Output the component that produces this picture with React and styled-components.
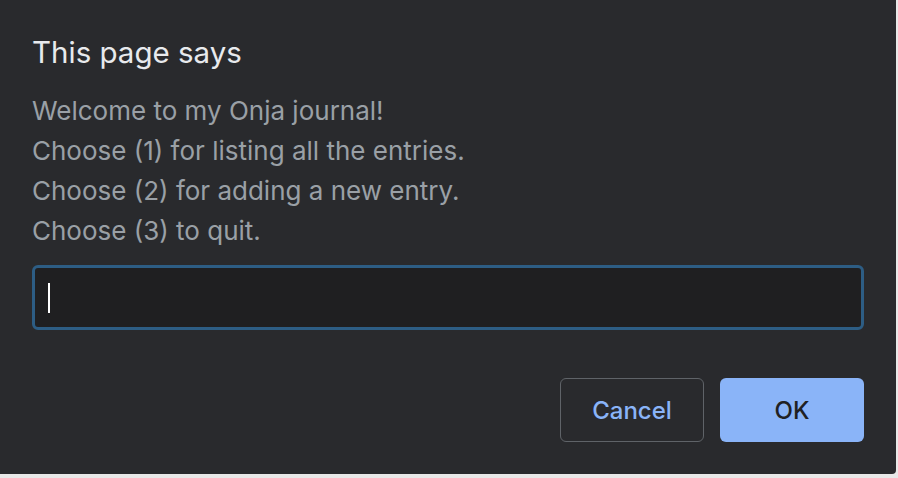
import React from 'react';
import styled, { createGlobalStyle } from 'styled-components';

const GlobalStyle = createGlobalStyle`
  html, body {
    margin: 0;
    padding: 0;
    background: #e8e8e8;
    font-family: Inter, "Noto Sans", "Liberation Sans", sans-serif;
  }
`;

const StyledDialog = styled.div`
  width: 896px;
  height: 474px;
  box-sizing: border-box;
  background: #292a2d;
  border-bottom-right-radius: 4px;
  padding: 34px 32px 32px 32px;
  display: flex;
  flex-direction: column;
`;

const StyledTitle = styled.h2`
  margin: 0;
  font-size: 29.5px;
  line-height: 36px;
  font-weight: 400;
  color: #e8eaed;
`;

const StyledMessage = styled.div`
  margin-top: 21px;
  font-size: 26px;
  line-height: 40px;
  color: #9aa0a6;
`;

const StyledInput = styled.div`
  margin-top: 14px;
  height: 65px;
  box-sizing: border-box;
  border: 3px solid #2d5d84;
  border-radius: 6px;
  background: #1f1f21;
  display: flex;
  align-items: center;
  padding-left: 13px;
`;

const StyledCaret = styled.span`
  width: 2px;
  height: 30px;
  background: #ffffff;
`;

const StyledActions = styled.div`
  margin-top: 48px;
  display: flex;
  justify-content: flex-end;
  gap: 16px;
`;

const StyledButton = styled.button`
  width: 144px;
  height: 64px;
  box-sizing: border-box;
  border-radius: 6px;
  font-family: inherit;
  font-size: 24px;
  font-weight: 500;
  cursor: pointer;
  border: ${props => (props.primary ? 'none' : '1px solid #5f6368')};
  background: ${props => (props.primary ? '#8ab4f8' : 'transparent')};
  color: ${props => (props.primary ? '#202124' : '#8ab4f8')};
`;

const App = () => {
  const lines = [
    'Welcome to my Onja journal!',
    'Choose (1) for listing all the entries.',
    'Choose (2) for adding a new entry.',
    'Choose (3) to quit.',
  ];

  return (
    <>
      <GlobalStyle />
      <StyledDialog>
        <StyledTitle>This page says</StyledTitle>
        <StyledMessage>
          {lines.map(line => (
            <div key={line}>{line}</div>
          ))}
        </StyledMessage>
        <StyledInput>
          <StyledCaret />
        </StyledInput>
        <StyledActions>
          <StyledButton type="button">Cancel</StyledButton>
          <StyledButton type="button" primary>
            OK
          </StyledButton>
        </StyledActions>
      </StyledDialog>
    </>
  );
};

export default App;
